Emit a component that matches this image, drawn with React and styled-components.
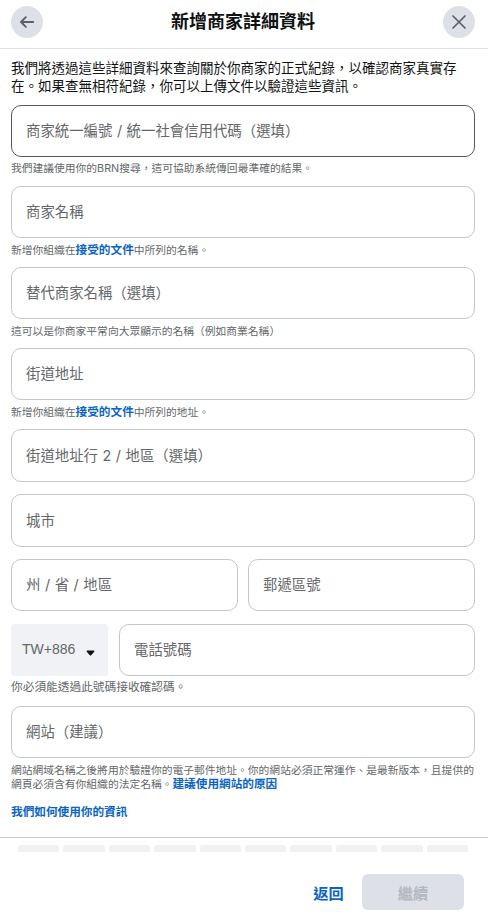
import React from 'react'
import styled, { createGlobalStyle } from 'styled-components'

const textColor = '#101213'
const mutedColor = '#63676a'
const linkColor = '#0a64c2'
const borderColor = '#c3c6c8'

const GlobalStyle = createGlobalStyle`
  * {
    box-sizing: border-box;
  }
  body {
    margin: 0;
    background: white;
    color: ${textColor};
    font-family: Inter, 'Noto Sans CJK TC', sans-serif;
  }
`

const Dialog = styled.div`
  display: flex;
  flex-direction: column;
  width: 488px;
  height: 912px;
  overflow: hidden;
`

const Header = styled.header`
  display: flex;
  align-items: center;
  justify-content: space-between;
  height: 49px;
  padding: 0 13px 5px 11px;
  border-bottom: 1px solid #dfe1e3;
`

const Title = styled.h1`
  margin: 0;
  font-size: 18px;
  line-height: 26px;
  font-weight: 700;
`

const RoundButton = styled.button`
  display: flex;
  align-items: center;
  justify-content: center;
  width: 32px;
  height: 32px;
  padding: 0;
  border: none;
  border-radius: 50%;
  background: #dde0e6;
  color: #5c6064;
`

const Content = styled.main`
  height: 788px;
  padding: 10px 13px 0 11px;
`

const Intro = styled.p`
  height: 46px;
  margin: 0;
  font-size: 13.5px;
  line-height: 18px;
`

const Field = styled.div`
  height: ${(props) => props.$space}px;
`

const Row = styled.div`
  display: flex;
  gap: ${(props) => props.$gap}px;
`

const Input = styled.div`
  display: flex;
  align-items: center;
  flex: 1;
  height: ${(props) => (props.$tall ? 53 : 52)}px;
  padding: 0 14px;
  border: 1px solid ${(props) => (props.$active ? '#56595c' : borderColor)};
  border-radius: 10px;
  color: ${mutedColor};
  font-size: 14.4px;
  line-height: 20px;
  word-spacing: 0.5px;
  white-space: pre;
`

const Hint = styled.div`
  padding-top: ${(props) => props.$top || 5}px;
  color: ${mutedColor};
  font-size: ${(props) => (props.$large ? 11.7 : 10.78)}px;
  line-height: 14px;
`

// the SC face sets brackets tight against the words they enclose
const Bracket = styled.span`
  font-family: 'Noto Sans CJK SC', sans-serif;
  line-height: 1;
`

const Link = styled.a`
  color: ${linkColor};
  font-size: 11.65px;
  font-weight: 700;
  line-height: ${(props) => (props.$tight ? 12 : 14)}px;
`

const InfoLink = styled(Link)`
  display: block;
`

const CountrySelect = styled.div`
  display: flex;
  align-items: center;
  justify-content: space-between;
  width: 97px;
  height: 52px;
  padding: 0 13px 2px 11px;
  border-radius: 4px;
  background: #f0f2f5;
  color: ${mutedColor};
  font-family: 'Liberation Sans', sans-serif;
  font-size: 14px;
`

const Caret = styled.svg`
  margin-top: 7px;
`

const Footer = styled.footer`
  flex: 1;
  border-top: 1px solid #cbced0;
`

const Steps = styled.div`
  display: flex;
  gap: 4px;
  padding: 7px 20px 0 18px;
`

const Step = styled.div`
  flex: 1;
  height: 7px;
  border-radius: 3px 3px 1px 1px;
  background: #eff1f2;
`

const Actions = styled.div`
  display: flex;
  justify-content: flex-end;
  gap: 18px;
  padding: 22px 24px 0 0;
`

const Button = styled.button`
  width: ${(props) => (props.$primary ? 102 : 31)}px;
  height: 36px;
  padding: 0 0 1px;
  border: none;
  border-radius: 6px;
  background: ${(props) => (props.$primary ? '#dde0e6' : 'none')};
  color: ${(props) => (props.$primary ? '#b4b8be' : linkColor)};
  font-family: inherit;
  font-size: 15.2px;
  font-weight: 700;
  white-space: nowrap;
`

const BackIcon = () => (
  <svg width="16" height="16" viewBox="0 0 16 16" fill="none">
    <path
      d="M14.2 8H2.2M6.8 3.2L2 8l4.8 4.8"
      stroke="currentColor"
      strokeWidth="1.9"
      strokeLinecap="round"
      strokeLinejoin="round"
    />
  </svg>
)

const CloseIcon = () => (
  <svg width="16" height="16" viewBox="0 0 16 16" fill="none">
    <path
      d="M2 2l12 12M14 2L2 14"
      stroke="currentColor"
      strokeWidth="1.7"
      strokeLinecap="round"
    />
  </svg>
)

const App = () => {
  return (
    <Dialog>
      <GlobalStyle />
      <Header>
        <RoundButton aria-label="返回">
          <BackIcon />
        </RoundButton>
        <Title>新增商家詳細資料</Title>
        <RoundButton aria-label="關閉">
          <CloseIcon />
        </RoundButton>
      </Header>
      <Content>
        <Intro>
          我們將透過這些詳細資料來查詢關於你商家的正式紀錄，以確認商家真實存在。如果查無相符紀錄，你可以上傳文件以驗證這些資訊。
        </Intro>
        <Field $space={81}>
          <Input $active>
            商家統一編號 / 統一社會信用代碼<Bracket>（</Bracket>選填<Bracket>）</Bracket>
          </Input>
          <Hint>我們建議使用你的BRN搜尋，這可協助系統傳回最準確的結果。</Hint>
        </Field>
        <Field $space={81}>
          <Input>商家名稱</Input>
          <Hint>
            新增你組織在<Link>接受的文件</Link>中所列的名稱。
          </Hint>
        </Field>
        <Field $space={81}>
          <Input>
            替代商家名稱<Bracket>（</Bracket>選填<Bracket>）</Bracket>
          </Input>
          <Hint $top={6}>
            這可以是你商家平常向大眾顯示的名稱<Bracket>（</Bracket>例如商業名稱<Bracket>）</Bracket>
          </Hint>
        </Field>
        <Field $space={81}>
          <Input>街道地址</Input>
          <Hint>
            新增你組織在<Link>接受的文件</Link>中所列的地址。
          </Hint>
        </Field>
        <Field $space={65}>
          <Input $tall>
            街道地址行 2 / 地區<Bracket>（</Bracket>選填<Bracket>）</Bracket>
          </Input>
        </Field>
        <Field $space={65}>
          <Input $tall>城市</Input>
        </Field>
        <Field $space={65}>
          <Row $gap={10}>
            <Input>州 / 省 / 地區</Input>
            <Input>郵遞區號</Input>
          </Row>
        </Field>
        <Field $space={82}>
          <Row $gap={11}>
            <CountrySelect>
              TW+886
              <Caret width="9" height="6" viewBox="0 0 9 6">
                <path d="M1 0.5h7q1 0.5 0 1.5L5.2 5.2q-0.7 0.6-1.4 0L1 2q-1-1 0-1.5z" fill="#101213" />
              </Caret>
            </CountrySelect>
            <Input>電話號碼</Input>
          </Row>
          <Hint $large $top={4}>
            你必須能透過此號碼接收確認碼。
          </Hint>
        </Field>
        <Field $space={99}>
          <Input>
            網站<Bracket>（</Bracket>建議<Bracket>）</Bracket>
          </Input>
          <Hint $top={6}>
            網站網域名稱之後將用於驗證你的電子郵件地址。你的網站必須正常運作、是最新版本，且提供的網頁必須含有你組織的法定名稱。<Link $tight>建議使用網站的原因</Link>
          </Hint>
        </Field>
        <InfoLink>我們如何使用你的資訊</InfoLink>
      </Content>
      <Footer>
        <Steps>
          {Array.from({ length: 10 }, (_, i) => (
            <Step key={i} />
          ))}
        </Steps>
        <Actions>
          <Button>返回</Button>
          <Button $primary>繼續</Button>
        </Actions>
      </Footer>
    </Dialog>
  )
}

export default App
